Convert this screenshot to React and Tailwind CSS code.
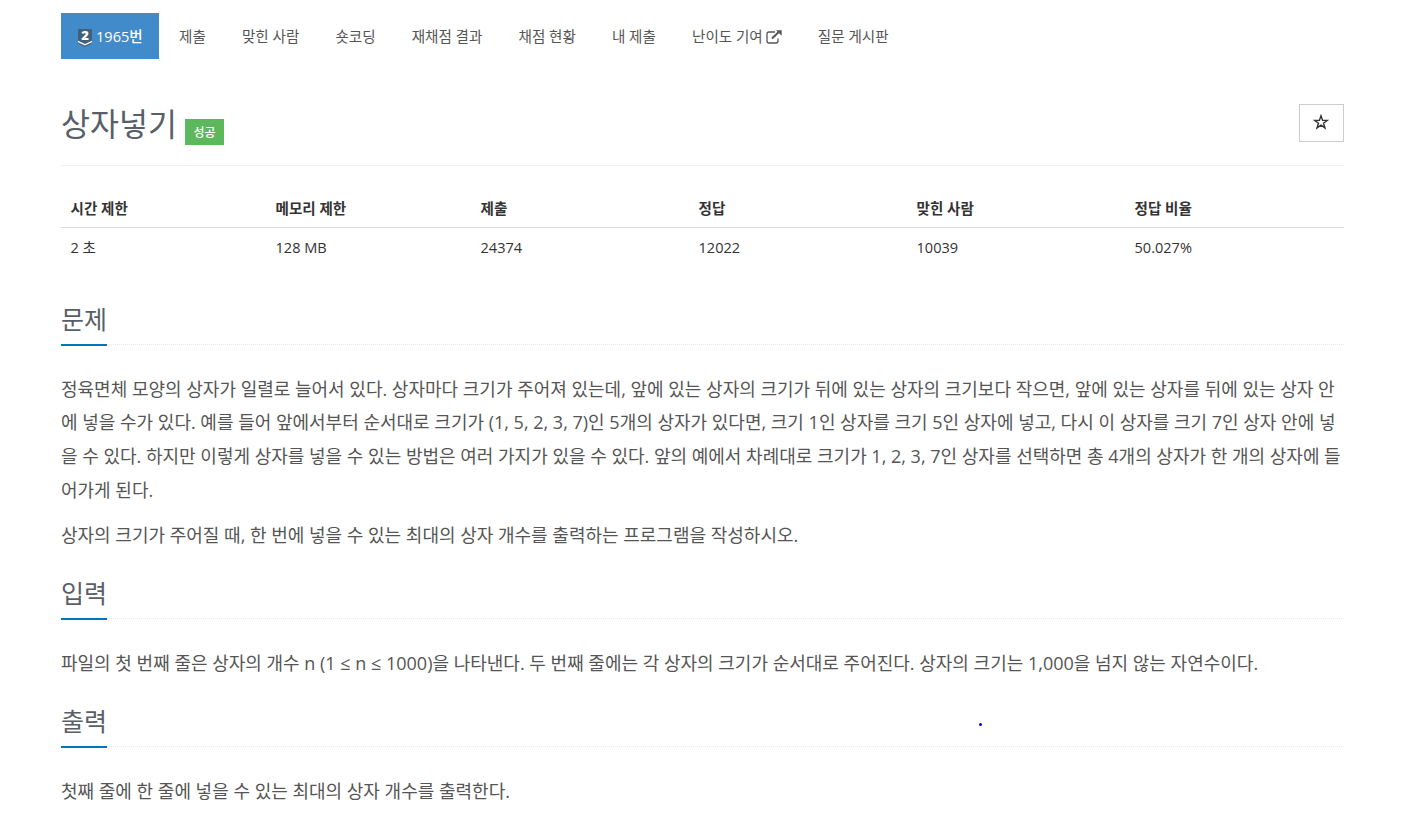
import React from "react";

const menus = [
  { name: "제출" },
  { name: "맞힌 사람" },
  { name: "숏코딩" },
  { name: "재채점 결과" },
  { name: "채점 현황" },
  { name: "내 제출" },
  { name: "난이도 기여", external: true },
  { name: "질문 게시판" },
];

const info = [
  { label: "시간 제한", value: "2 초", width: "w-[205px]" },
  { label: "메모리 제한", value: "128 MB", width: "w-[205px]" },
  { label: "제출", value: "24374", width: "w-[218px]" },
  { label: "정답", value: "12022", width: "w-[218px]" },
  { label: "맞힌 사람", value: "10039", width: "w-[218px]" },
  { label: "정답 비율", value: "50.027%", width: "w-[219px]" },
];

const TierBadge = () => (
  <svg
    className="mr-[4px] mt-[3px] h-[18px] w-[14px] overflow-visible"
    viewBox="0 0 14 18"
  >
    <path d="M0 0h14v14.2L7 18 0 14.2z" fill="#435f7a" />
    <path d="M0 11.8 7 15l7-3.2v1.5L7 16.6l-7-3.3z" fill="#fff" />
    <text
      x="7"
      y="11"
      textAnchor="middle"
      fontFamily="Open Sans"
      fontSize="13"
      fontWeight="800"
      fill="#fff"
    >
      2
    </text>
  </svg>
);

const ExternalLink = () => (
  <svg
    className="ml-[3px] h-[14px] w-[16px]"
    viewBox="0 0 16 14"
    fill="none"
    stroke="#555"
  >
    <path d="M9 2H3Q1 2 1 4v7q0 2 2 2h7q2 0 2-2V8.5" strokeWidth="1.3" />
    <path d="m6 8.5 6.5-6.3" strokeWidth="2" />
    <path d="M10 .2h5.7v5.6z" fill="#555" stroke="none" />
  </svg>
);

const Section = ({ title, children }) => {
  return (
    <section>
      <div className="flex h-[42px] border-b border-dotted border-[#e4e9f0]">
        <h2 className="-mb-[2px] h-[43px] w-[46px] whitespace-nowrap border-b-2 border-[#0076bd] text-[25px] leading-[33px] text-[#585f69]">
          {title}
        </h2>
      </div>
      <div className="pt-[28px] whitespace-nowrap text-[18px] leading-[33.75px] text-[#555]">
        {children}
      </div>
    </section>
  );
};

const App = () => {
  return (
    <div className="relative h-[826px] overflow-hidden bg-white pl-[61px] pr-[63px] pt-[13px] font-['Open_Sans','Noto_Sans_CJK_KR',sans-serif] text-[14.55px] text-[#333]">
      {/* Problem menu */}
      <nav className="flex h-[46px] items-center whitespace-nowrap text-[#555]">
        <div className="mr-[2px] flex h-[46px] w-[98px] items-center bg-[#428bca] pl-[17px] text-white">
          <TierBadge />
          <span className="pt-[2px] font-medium">1965번</span>
        </div>
        {menus.map((menu) => (
          <div className="flex items-center px-[18.07px] pt-[2px]" key={menu.name}>
            {menu.name}
            {menu.external && <ExternalLink />}
          </div>
        ))}
      </nav>

      {/* Title */}
      <div className="flex h-[107px] justify-between border-b border-[#eee] pt-[45px]">
        <div className="flex">
          <h1 className="text-[31.5px] leading-[40px] text-[#585f69]">
            상자넣기
          </h1>
          <span className="ml-[8px] mt-[15px] flex h-[26px] w-[39px] items-center justify-center bg-[#5cb85c] pt-[1px] text-[12px] font-medium text-white">
            성공
          </span>
        </div>
        <button className="flex h-[38px] w-[45px] items-center justify-center border border-[#ccc] pb-[2px] pr-[2px]">
          <svg
            className="h-[16px] w-[16px]"
            viewBox="0 0 16 16"
            fill="none"
            stroke="#333"
            strokeWidth="1.4"
          >
            <path d="m8 1.8 1.6 4.6h4.8l-3.9 2.9 1.5 4.6L8 11.1l-4 2.8 1.5-4.6-3.9-2.9h4.8z" />
          </svg>
        </button>
      </div>

      {/* Limits and submission counts */}
      <table className="mt-[23px] w-full table-fixed text-left">
        <thead>
          <tr className="h-[38px] border-b border-[#ddd]">
            {info.map((i) => (
              <th
                className={`${i.width} pl-[9.5px] pt-[2px] font-bold`}
                key={i.label}
              >
                {i.label}
              </th>
            ))}
          </tr>
        </thead>
        <tbody>
          <tr className="h-[38px]">
            {info.map((i) => (
              <td className="pl-[9.5px] pt-[3px]" key={i.label}>
                {i.value}
              </td>
            ))}
          </tr>
        </tbody>
      </table>

      <div className="mt-[38px] flex flex-col gap-[24px]">
        <Section title="문제">
          <p className="-mt-[0.5px]">
            정육면체 모양의 상자가 일렬로 늘어서 있다. 상자마다 크기가 주어져 있는데, 앞에 있는 상자의 크기가 뒤에 있는 상자의 크기보다 작으면, 앞에 있는 상자를 뒤에 있는 상자 안
            <br />
            에 넣을 수가 있다. 예를 들어 앞에서부터 순서대로 크기가 (1, 5, 2, 3, 7)인 5개의 상자가 있다면, 크기 1인 상자를 크기 5인 상자에 넣고, 다시 이 상자를 크기 7인 상자 안에 넣
            <br />
            을 수 있다. 하지만 이렇게 상자를 넣을 수 있는 방법은 여러 가지가 있을 수 있다. 앞의 예에서 차례대로 크기가 1, 2, 3, 7인 상자를 선택하면 총 4개의 상자가 한 개의 상자에 들
            <br />
            어가게 된다.
          </p>
          <p className="mt-[11.5px]">
            상자의 크기가 주어질 때, 한 번에 넣을 수 있는 최대의 상자 개수를 출력하는 프로그램을 작성하시오.
          </p>
        </Section>
        <Section title="입력">
          <p>
            파일의 첫 번째 줄은 상자의 개수 n (1 ≤ n ≤ 1000)을 나타낸다. 두 번째 줄에는 각 상자의 크기가 순서대로 주어진다. 상자의 크기는 1,000을 넘지 않는 자연수이다.
          </p>
        </Section>
        <Section title="출력">
          <p>첫째 줄에 한 줄에 넣을 수 있는 최대의 상자 개수를 출력한다.</p>
        </Section>
      </div>

      <span className="absolute left-[979px] top-[723px] h-[3px] w-[3px] rounded-full bg-[#00f]" />
    </div>
  );
};

export default App;
